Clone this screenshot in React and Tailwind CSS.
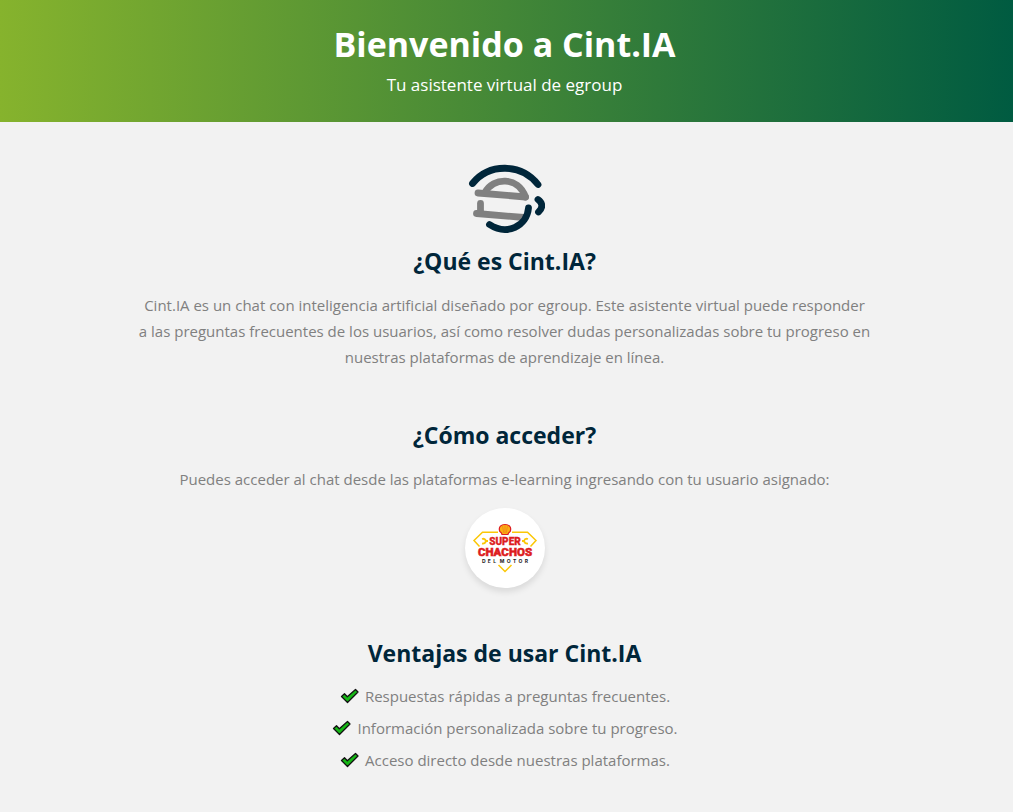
const platformsText =
  'Puedes acceder al chat desde las plataformas e-learning ingresando con tu usuario asignado:';

const advantages = [
  'Respuestas rápidas a preguntas frecuentes.',
  'Información personalizada sobre tu progreso.',
  'Acceso directo desde nuestras plataformas.',
];

function CintiaLogo() {
  return (
    <svg className="mx-auto block h-20 w-20" viewBox="465 159 80 80" fill="none" strokeLinecap="round" strokeLinejoin="round" role="img" aria-label="Cint.IA">
      <g stroke="#808080" strokeWidth="6.8">
        <path d="M478 193 L525.5 197" />
        <path d="M485 192.500 C493 177 518 176 525.5 197" />
        <path d="M480.500 203.500 V213.500" />
        <path d="M476.500 213.500 L524 217.500" />
      </g>
      <g stroke="#00263a" strokeWidth="6.800">
        <path d="M472.500 183.500 C489 163 521 163 538 184.500" />
        <path d="M528.500 208 C527 226 507 236 489.500 224.500" />
        <path d="M538 199.500 C543 203 543 208 538.500 212" />
      </g>
    </svg>
  );
}

function SuperChachosLogo() {
  return (
    <svg className="h-20 w-20" viewBox="0 0 80 80" fill="none" aria-hidden="true">
      <g stroke="#fbc707" strokeWidth="1.500">
        <path d="M33 24.300 H17.500 L9 32.500 L14.500 38.500" />
        <path d="M47 24.300 H62.500 L71 32.500 L65.500 38.500" />
        <path d="M33.500 57 L40 63.500 L46.500 57" />
      </g>
      <g stroke="#fbc707" strokeWidth="1.800">
        <path d="M17 31 Q20 30 21 33 Q20 36 17 35.500 M20.500 33 H23" />
        <path d="M63 31 Q60 30 59 33 Q60 36 63 35.500 M59.500 33 H57" />
      </g>
      <path d="M37 26.500 L36.500 25 L34.800 23.500 C33 18.500 36.500 16.500 40 16.500 C43.500 16.500 47 18.500 45.200 23.500 L43.500 25 L43 26.500 Z" fill="#fbb013" stroke="#dd1d21" strokeWidth="1.200" />
      <path d="M40 17.500 V25 M37.500 18 L38.800 25 M42.500 18 L41.200 25" stroke="#e8571c" strokeWidth="0.400" />
      <g fill="#dd1d21" stroke="#dd1d21" textAnchor="middle" fontFamily="Roboto, sans-serif" fontWeight="900">
        <text x="40" y="37" fontSize="10" strokeWidth="0.300">SUPER</text>
        <text x="40" y="48" fontSize="11.500" strokeWidth="0.500">CHACHOS</text>
      </g>
      <text x="40" y="54.800" textAnchor="middle" fill="#222222" fontFamily="Inter, sans-serif" fontWeight="700" fontSize="5">
        {'D\u00a0\u00a0E\u00a0\u00a0L\u00a0\u00a0\u00a0M\u00a0\u00a0O\u00a0\u00a0T\u00a0\u00a0O\u00a0\u00a0R'}
      </text>
    </svg>
  );
}

function CheckIcon() {
  return (
    <svg className="h-4 w-5 shrink-0" viewBox="-1 0 20 16" aria-hidden="true">
      <path d="M1.500 8.500 L4.500 5.800 L7.300 8.700 L15.500 1.500 L18 4 L7.500 14.500 Z" fill="#16b816" stroke="#111111" strokeWidth="1.300" strokeLinejoin="round" />
    </svg>
  );
}

function SectionTitle({ children }) {
  return <h2 className="text-[23px] leading-8 font-bold text-[#00263a]">{children}</h2>;
}

export default function App() {
  return (
    <div className="min-h-screen bg-[#f2f2f2] text-center font-['Open_Sans',sans-serif] text-[15px] leading-[26px] text-[#808080]">
      <header className="bg-linear-to-r/srgb from-[#86b32d] to-[#005b41] pt-5 pr-6 pb-6 pl-5 text-white">
        <h1 className="text-[34px] leading-12 font-bold">Bienvenido a Cint.IA</h1>
        <p className="mt-1 text-[17px]">Tu asistente virtual de egroup</p>
      </header>
      <main className="pt-[37px] pr-6 pb-8 pl-5">
        <section className="mx-auto max-w-[760px]">
          <CintiaLogo />
          <div className="mt-1.5">
            <SectionTitle>¿Qué es Cint.IA?</SectionTitle>
          </div>
          <p className="mt-[15px] px-2">
            Cint.IA es un chat con inteligencia artificial diseñado por egroup. Este asistente virtual puede responder
            {' a\u00a0las '}
            preguntas frecuentes de los usuarios, así como resolver dudas personalizadas sobre tu progreso en
            nuestras plataformas de aprendizaje en línea.
          </p>
        </section>
        <section className="mx-auto mt-[49px] max-w-[760px]">
          <SectionTitle>¿Cómo acceder?</SectionTitle>
          <p className="mt-[15px]">{platformsText}</p>
          <a href="#superchachos" aria-label="Super Chachos del Motor" className="mx-auto mt-4 block h-20 w-20 rounded-full bg-white shadow-[0_4px_6px_rgba(0,0,0,0.1)]">
            <SuperChachosLogo />
          </a>
        </section>
        <section className="mx-auto mt-[49px] max-w-[760px]">
          <SectionTitle>Ventajas de usar Cint.IA</SectionTitle>
          <ul className="mt-3.5 flex flex-col gap-1.5">
            {advantages.map((item) => (
              <li key={item} className="flex items-center justify-center gap-1.5">
                <CheckIcon />
                <span>{item}</span>
              </li>
            ))}
          </ul>
        </section>
      </main>
    </div>
  );
}
